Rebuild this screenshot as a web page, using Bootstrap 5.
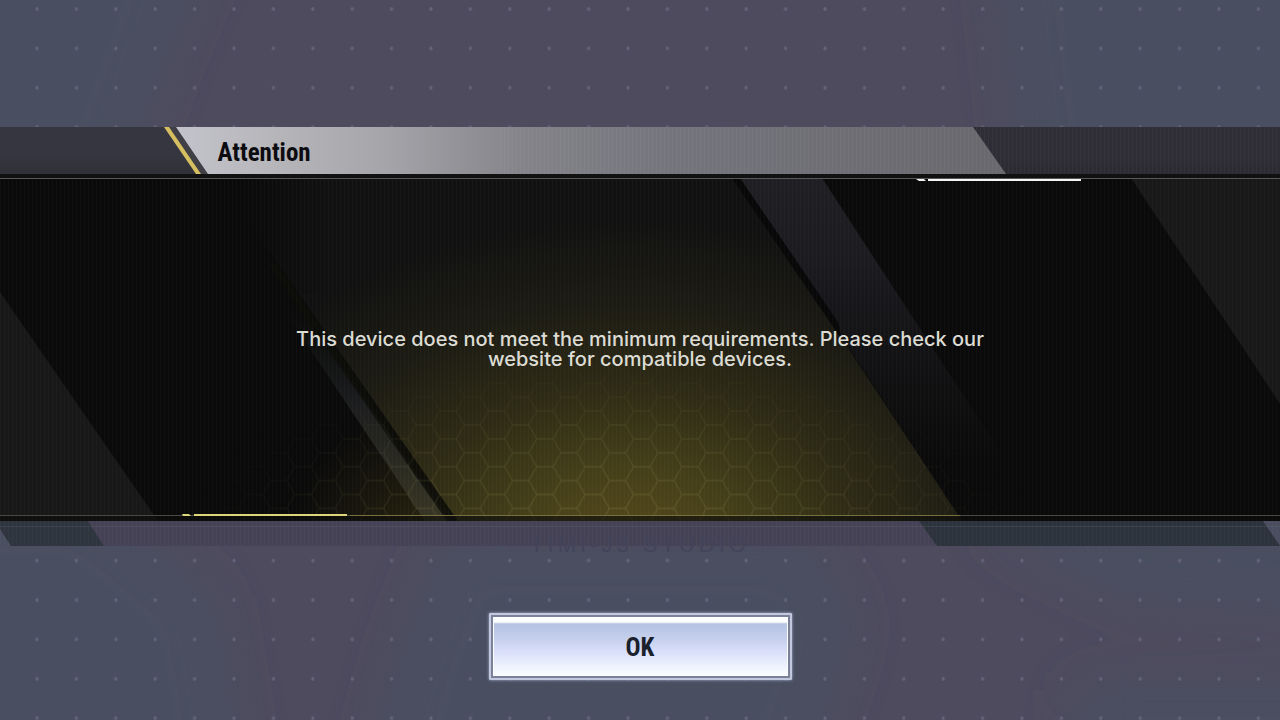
<!DOCTYPE html>
<html lang="en">
<head>
<meta charset="utf-8">
<meta name="viewport" content="width=device-width, initial-scale=1">
<title>Attention</title>
<link href="https://cdn.jsdelivr.net/npm/bootstrap@5.3.0/dist/css/bootstrap.min.css" rel="stylesheet">
<style>
body{background:#4e4b5e;color:#dcdcd4;font-family:Inter,"Liberation Sans",sans-serif}
.art{inset:0;pointer-events:none}
.screen{padding-top:127px}
.title-row{height:47px}
.title-text{font:700 25px/52px "Roboto Condensed","Liberation Sans",sans-serif;color:#0c0c10;padding-left:17%}
.panel-box{height:347px;background:#0a0a0a}
.message{max-width:720px;padding-top:2px;font-size:20px;font-weight:500;line-height:20px}
.shelf{height:25px}
.studio{font:22px/24px "Liberation Sans",sans-serif;letter-spacing:4px;color:#43435a;margin-top:12px}
.btn-ok{width:303px;height:67px;margin-top:67px;padding:0;border:2px solid #c2c8de;border-radius:1px;
background:linear-gradient(#fbfdff 0 7px,#b5c3e2 9px,#c5d0ec 24px,#d9defa 36px,#f6fbff 58px) padding-box;
box-shadow:inset 0 0 0 2px #7a8198,inset 0 0 0 3px #fbfdff,0 0 3px #aab4d8;
color:#1a212c;font:700 25px/66px "Roboto Condensed","Liberation Sans",sans-serif}
.btn-ok:hover{filter:brightness(1.05)}
</style>
</head>
<body class="position-relative min-vh-100 overflow-x-hidden">
<svg class="art position-absolute w-100 h-100" viewBox="0 0 1280 720" preserveAspectRatio="xMidYMid slice" aria-hidden="true">
  <defs>
    <pattern id="dots" width="39.4" height="39.4" patternUnits="userSpaceOnUse" x="17.3" y="-10.7"><ellipse cx="19.7" cy="19.7" rx="1.6" ry="2" fill="#73738a" opacity=".6"/></pattern>
    <filter id="soft" x="-30%" y="-30%" width="160%" height="160%"><feGaussianBlur stdDeviation="26"/></filter>
  </defs>
  <g fill="#4a5060" filter="url(#soft)">
    <path d="M-60-60H210L160 60 110 200H-60z"/>
    <path d="M-60 500H90L210 600 240 780H-60z"/>
    <path d="M1000-60H1350V200H1030z"/>
    <path d="M450 540H800L850 620 800 780H370L410 640z"/>
    <path d="M980 520H1350V610L1120 590z"/>
    <path d="M1080 690H1350V780H1080z"/>
  </g>
  <rect width="1280" height="720" fill="url(#dots)"/>
</svg>

<main class="screen position-relative d-flex flex-column">
  <header class="title-row position-relative">
    <svg class="art position-absolute w-100 h-100" viewBox="0 0 1280 47" preserveAspectRatio="none" aria-hidden="true">
      <defs>
        <linearGradient id="bar" x1="175" x2="1006" y1="0" y2="0" gradientUnits="userSpaceOnUse">
          <stop offset="0" stop-color="#c3c3cb"/><stop offset=".1" stop-color="#b8b8bd"/><stop offset=".25" stop-color="#a5a5aa"/><stop offset=".42" stop-color="#838389"/><stop offset=".6" stop-color="#74747c"/><stop offset="1" stop-color="#69686d"/>
        </linearGradient>
        <linearGradient id="fade" x1="0" x2="0" y1="0" y2="1"><stop offset=".6" stop-color="#222" stop-opacity="0"/><stop offset="1" stop-color="#222" stop-opacity=".3"/></linearGradient>
        <pattern id="lines" width="4" height="8" patternUnits="userSpaceOnUse"><path d="M.5 0V8" stroke="#fff" stroke-opacity=".035"/></pattern>
      </defs>
      <path d="M0 0H200V47H0z" fill="#363641"/>
      <path d="M960 0H1280V47H960z" fill="#2f2e37"/>
      <path d="M0 0H1280V47H0z" fill="url(#fade)"/>
      <path d="M169 0H176L208 47H201z" fill="#403f45"/>
      <path d="M164 0H169L201 47H196z" fill="#d5bf61"/>
      <path d="M176 0H973L1006 47H208z" fill="url(#bar)"/>
      <path d="M500 0H1280V47H500z" fill="url(#lines)"/>
    </svg>
    <h1 class="title-text position-relative m-0">Attention</h1>
  </header>

  <section class="panel-box position-relative d-flex align-items-center justify-content-center text-center">
    <svg class="art position-absolute w-100 h-100" viewBox="0 0 1280 347" preserveAspectRatio="none" aria-hidden="true">
      <defs>
        <radialGradient id="glow" cx="0" cy="0" r="1" gradientUnits="userSpaceOnUse" gradientTransform="translate(630 375) scale(470 330)">
          <stop offset="0" stop-color="#57491c"/><stop offset=".25" stop-color="#443f19"/><stop offset=".5" stop-color="#2d2a15"/><stop offset=".75" stop-color="#1c1b13"/><stop offset="1" stop-color="#111111"/>
        </radialGradient>
        <radialGradient id="spill" cx="0" cy="0" r="1" gradientUnits="userSpaceOnUse" gradientTransform="translate(440 370) scale(150 140)">
          <stop offset="0" stop-color="#2c2710"/><stop offset="1" stop-color="#2c2710" stop-opacity="0"/>
        </radialGradient>
        <linearGradient id="center" x1="240" x2="330" y1="0" y2="0" gradientUnits="userSpaceOnUse"><stop stop-color="#0a0a0a"/><stop offset="1" stop-color="#0a0a0a" stop-opacity="0"/></linearGradient>
        <linearGradient id="beamL" x1="0" x2="0" y1="130" y2="347" gradientUnits="userSpaceOnUse"><stop stop-color="#131415" stop-opacity="0"/><stop offset=".45" stop-color="#1b1c1d"/><stop offset="1" stop-color="#383624"/></linearGradient>
        <linearGradient id="beamR" x1="0" x2="0" y1="0" y2="290" gradientUnits="userSpaceOnUse"><stop stop-color="#202024"/><stop offset=".3" stop-color="#1b1b20"/><stop offset=".6" stop-color="#131315"/><stop offset="1" stop-color="#0a0a0a"/></linearGradient>
        <radialGradient id="hexfade" cx="0" cy="0" r="1" gradientUnits="userSpaceOnUse" gradientTransform="translate(610 370) scale(430 190)">
          <stop offset=".2" stop-color="#fff"/><stop offset=".6" stop-color="#999"/><stop offset="1" stop-color="#000"/>
        </radialGradient>
        <mask id="hexmask" maskUnits="userSpaceOnUse" x="0" y="0" width="1280" height="347"><path d="M0 0H1280V347H0z" fill="url(#hexfade)"/></mask>
        <pattern id="hex" width="48.4" height="27.8" x="448.1" y="306.6" patternUnits="userSpaceOnUse">
          <path d="M0 13.9H8.2L16.2 0H32.2L40.2 13.9H48.4M40.2 13.9L32.2 27.8H16.2L8.2 13.9" fill="none" stroke="#b5aa68" stroke-opacity=".18" stroke-width="1.3"/>
        </pattern>
        <pattern id="panelLines" width="4" height="8" patternUnits="userSpaceOnUse"><path d="M.5 0V8" stroke="#fff" stroke-opacity=".022"/></pattern>
      </defs>
      <path d="M0 118L158 347H0z" fill="#181818"/>
      <path d="M1131 4H1280V230z" fill="#191919"/>
      <path d="M150 150H480V347H150z" fill="url(#spill)"/>
      <path d="M218 4H736L962 347H458z" fill="url(#glow)"/>
      <path d="M218 4H340V120H296z" fill="url(#center)"/>
      <path d="M280 130H300L449 347H425z" fill="url(#beamL)"/>
      <path d="M268 90L277 90 458 347H447z" fill="#0c0c09" opacity=".8"/>
      <path d="M736 4H822L1008 290H926z" fill="url(#beamR)"/>
      <path d="M732 4H740L838 148 842 166z" fill="#080809"/>
      <path d="M0 0H1280V347H0z" fill="url(#hex)" mask="url(#hexmask)"/>
      <path d="M0 0H1280V347H0z" fill="url(#panelLines)"/>
      <path d="M0 0H1280V4H0z" fill="#111112"/>
      <path d="M0 4H1280V5H0z" fill="#58585a"/>
      <path d="M0 342H1280V347H0z" fill="#0d0d0a" opacity=".65"/>
      <path d="M0 341H1280V342H0z" fill="#4a4a44"/>
      <path d="M350 341H960V342H350z" fill="#88803a" opacity=".7"/>
      <path d="M928 5H1081V7H928zM916 5H924L926 7H919z" fill="#f4f4f4"/>
      <path d="M194 340H347V342H194zM182 340H189L191 342H183z" fill="#ddd57a"/>
    </svg>
    <p class="message position-relative m-0">This device does not meet the minimum requirements. Please check our website for compatible devices.</p>
  </section>

  <div class="shelf position-relative d-flex justify-content-center">
    <svg class="art position-absolute w-100 h-100" viewBox="0 0 1280 25" preserveAspectRatio="none" aria-hidden="true">
      <path d="M88 0H919L937 25H104z" fill="#454256"/>
      <path d="M0 0H88L104 25H11L0 8z" fill="#2f353f"/>
      <path d="M919 0H1263L1280 25H937z" fill="#2c333c"/>
      <path d="M0 5H1280V6H0z" fill="#66707c" opacity=".25"/>
      <path d="M0 0H1280V25H0z" fill="url(#lines)" opacity=".7"/>
    </svg>
    <span class="studio position-relative text-nowrap">TIMI-J3 STUDIO</span>
  </div>

  <button type="button" class="btn btn-ok align-self-center">OK</button>
</main>
<script src="https://cdn.jsdelivr.net/npm/bootstrap@5.3.0/dist/js/bootstrap.bundle.min.js"></script>
</body>
</html>
